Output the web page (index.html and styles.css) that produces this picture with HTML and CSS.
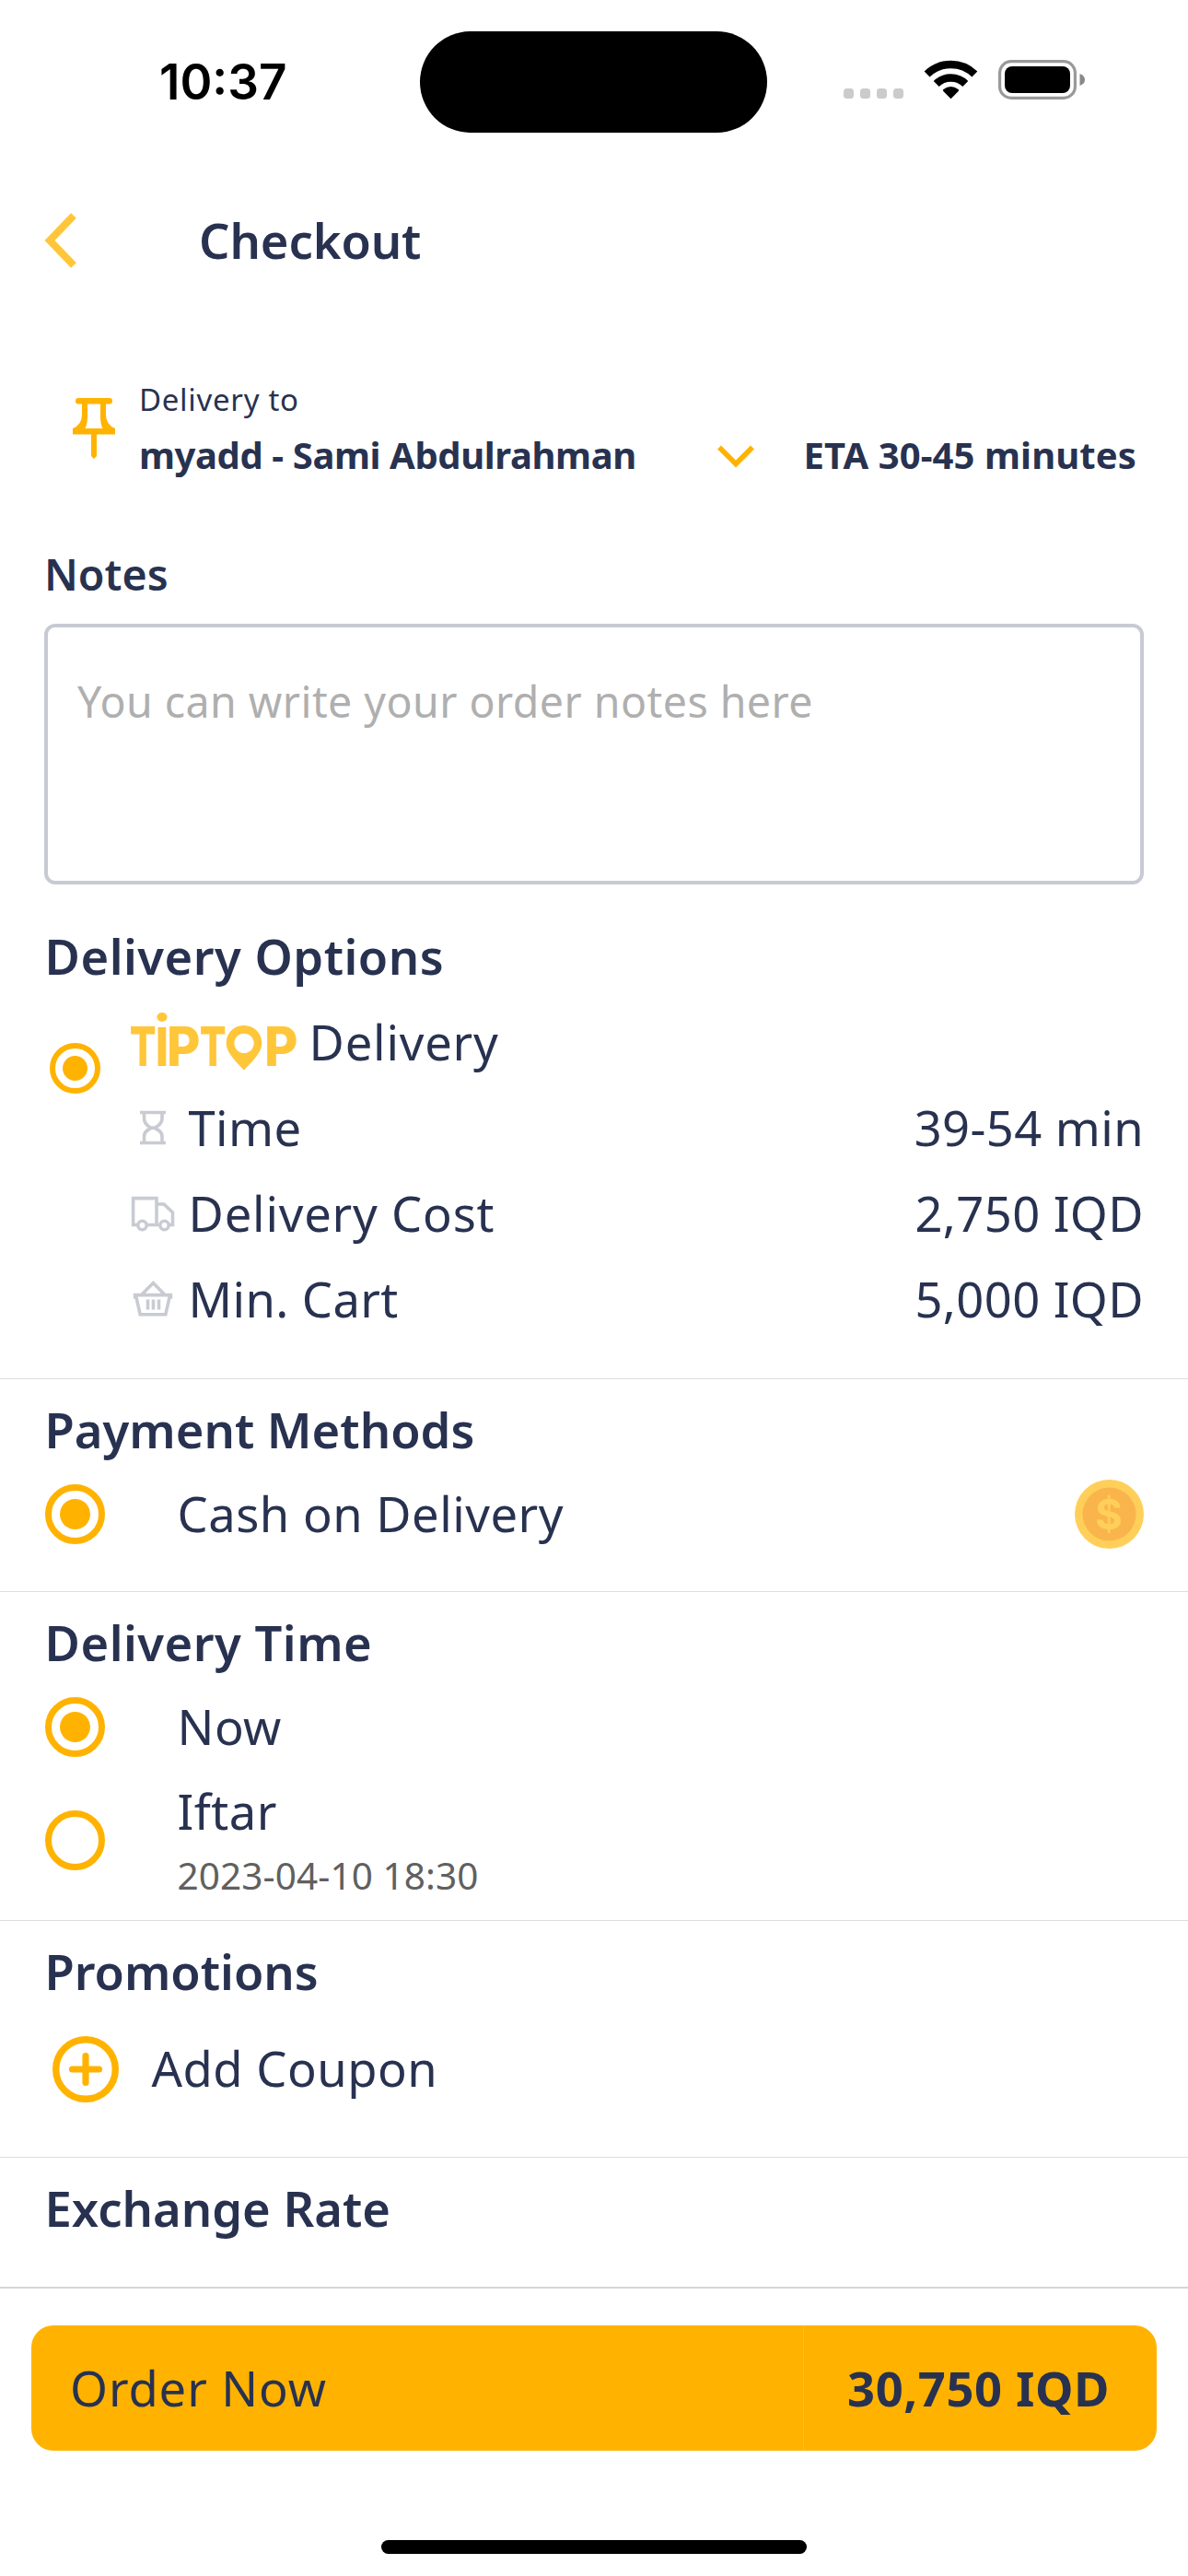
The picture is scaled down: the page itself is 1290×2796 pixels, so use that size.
FILE: index.html
```html
<!DOCTYPE html>
<html lang="en">
<head>
<meta charset="utf-8">
<title>Checkout</title>
<link rel="stylesheet" href="styles.css">
</head>
<body>
<div class="screen">
  <div class="status">
    <span class="clock">10:37</span>
    <span class="island"></span>
    <svg class="status-icons" width="262" height="44" viewBox="0 0 262 44">
      <g fill="#cbcbcb">
        <rect x="0" y="31" width="11" height="11" rx="3.5"/>
        <rect x="18" y="31" width="11" height="11" rx="3.5"/>
        <rect x="36" y="31" width="11" height="11" rx="3.5"/>
        <rect x="54" y="31" width="11" height="11" rx="3.5"/>
      </g>
      <g fill="none" stroke="#000" stroke-width="8.4">
        <path d="M90.600 15.600A37 37 0 0 1 142.400 15.600"/>
        <path d="M100.700 26A22.500 22.500 0 0 1 132.300 26"/>
      </g>
      <path d="M116.500 42.200l-8.200-8.300q-.9-1 .1-1.800q8.100-6.300 16.200 0q1 .8.100 1.800z"/>
      <rect x="169.600" y="1.600" width="81.800" height="39.800" rx="12.500" fill="none" stroke="#999" stroke-width="3.200"/>
      <rect x="175" y="7" width="71" height="29" rx="8"/>
      <path d="M256.500 15q5.500 2 5.500 6.500t-5.500 6.500z" fill="#888"/>
    </svg>
  </div>

  <header class="topbar">
    <svg width="36" height="62" viewBox="0 0 36 62"><path d="M32 4L6 31L32 58" fill="none" stroke="#ffc63a" stroke-width="8"/></svg>
    <h1 class="title">Checkout</h1>
  </header>

  <section class="address">
    <svg class="pin" width="46" height="66" viewBox="0 0 46 66">
      <path fill="#ffb300" fill-rule="evenodd" d="M6 0H40Q43 0 43 3.300T40 6.500H36V18Q36 29 46 33V39.500H26V63L23 66L20 63V39.500H0V33Q10 29 10 18V6.500H6Q3 6.500 3 3.300T6 0ZM16 6.500V20Q16 28 13.500 33H32.500Q30 28 30 20V6.500Z"/>
    </svg>
    <div class="address-text">
      <span class="address-label">Delivery to</span>
      <span class="address-name">myadd - Sami Abdulrahman</span>
    </div>
    <svg class="caret" width="42" height="26" viewBox="0 0 42 26"><path d="M3 3.500L21 21.500L39 3.500" fill="none" stroke="#ffb300" stroke-width="5.500"/></svg>
    <span class="eta">ETA 30-45 minutes</span>
  </section>

  <section class="notes">
    <h2 class="notes-title">Notes</h2>
    <div class="notes-box">You can write your order notes here</div>
  </section>

  <section class="section options">
    <h2 class="heading">Delivery Options</h2>
    <div class="option">
      <span class="radio radio-small checked"></span>
      <div class="option-rows">
        <div class="row brand-row">
          <svg class="brand" width="180" height="63" viewBox="33 30 540 189" fill="#ffc63a" font-family="Inter, sans-serif">
            <text x="29" y="205" font-size="179" font-weight="800" textLength="87" lengthAdjust="spacingAndGlyphs">T</text>
            <text x="104" y="205" font-size="232" font-weight="550" textLength="62" lengthAdjust="spacingAndGlyphs">i</text>
            <text x="150" y="205" font-size="179" font-weight="800" textLength="110" lengthAdjust="spacingAndGlyphs">P</text>
            <text x="257" y="205" font-size="179" font-weight="800" textLength="87" lengthAdjust="spacingAndGlyphs">T</text>
            <path fill-rule="evenodd" d="M402 72C435 72 460 97 460 130C460 160 430 188 402 218C374 188 344 160 344 130C344 97 369 72 402 72ZM402 98A32 32 0 1 0 402 162A32 32 0 1 0 402 98Z"/>
            <text x="468" y="205" font-size="179" font-weight="800" textLength="110" lengthAdjust="spacingAndGlyphs">P</text>
          </svg>
          <span>Delivery</span>
        </div>
        <div class="row">
          <svg class="row-icon" width="48" height="44" viewBox="0 0 48 44">
            <path d="M10 5.500H38M10 38.500H38M14.500 6V12Q14.500 18 21 21.500Q24 23 27 21.500Q34 18 34 12V6M14.500 38V32Q14.500 26 21 23Q24 21 27 23Q34 26 34 32V38"/>
          </svg>
          <span class="tight">Time</span><span class="value tight">39-54 min</span>
        </div>
        <div class="row">
          <svg class="row-icon" width="48" height="44" viewBox="0 0 48 44">
            <path d="M7 34.500H2.600V5.600H28V34.500H18M28 12H36L45.500 21V34.500H42M30 34.500H18"/>
            <circle cx="12.500" cy="35" r="4.700"/><circle cx="36.500" cy="35" r="4.700"/>
          </svg>
          <span>Delivery Cost</span><span class="value tight">2,750 IQD</span>
        </div>
        <div class="row">
          <svg class="row-icon" width="48" height="44" viewBox="0 0 48 44">
            <path d="M4.600 20V17.600H43.400V20H42L37.800 38.800H10.200L6 20ZM12 17L24.400 4.500L36.500 17M18.500 22.500V33.500M24.500 22.500V33.500M30.500 22.500V33.500"/>
          </svg>
          <span class="tight">Min. Cart</span><span class="value tight">5,000 IQD</span>
        </div>
      </div>
    </div>
  </section>

  <section class="section payment">
    <h2 class="heading heading-tight">Payment Methods</h2>
    <div class="choice">
      <span class="radio checked"></span>
      <span class="choice-label">Cash on Delivery</span>
      <svg class="coin" width="75" height="75" viewBox="0 0 75 75">
        <circle cx="37.500" cy="37.500" r="37.500" fill="#ffcf5a"/>
        <circle cx="37.500" cy="37.500" r="29" fill="#f9b54c"/>
        <text x="37.500" y="54" text-anchor="middle" font-family="Inter, sans-serif" font-weight="700" font-size="45" fill="#ffcf5a">$</text>
      </svg>
    </div>
  </section>

  <section class="section schedule">
    <h2 class="heading">Delivery Time</h2>
    <div class="choice">
      <span class="radio checked"></span>
      <span class="choice-label">Now</span>
    </div>
    <div class="choice choice-tall">
      <span class="radio"></span>
      <div class="choice-label stacked">
        <span>Iftar</span>
        <span class="date">2023-04-10 18:30</span>
      </div>
    </div>
  </section>

  <section class="section promotions">
    <h2 class="heading heading-tight">Promotions</h2>
    <div class="coupon">
      <svg width="72" height="72" viewBox="0 0 72 72" fill="none" stroke="#ffb300">
        <circle cx="36" cy="36" r="32.300" stroke-width="7.400"/>
        <path d="M36 21.500V50.500M21.500 36H50.500" stroke-width="7.200" stroke-linecap="round"/>
      </svg>
      <span class="coupon-label">Add Coupon</span>
    </div>
  </section>

  <section class="section exchange">
    <h2 class="heading heading-tight">Exchange Rate</h2>
  </section>

  <footer class="footer">
    <div class="order">
      <span class="order-label">Order Now</span>
      <span class="order-total">30,750 IQD</span>
    </div>
    <span class="home"></span>
  </footer>
</div>
</body>
</html>
```
FILE: styles.css
```css
* { box-sizing: border-box; }

body {
  margin: 0;
  background: #fff;
  color: #283250;
  font-family: "Noto Sans", sans-serif;
  font-size: 52.5px;
  letter-spacing: 0.8px;
}

h1, h2 { margin: 0; font-size: inherit; font-weight: 580; }
svg { display: block; flex: none; }

.screen {
  width: 1290px;
  height: 2796px;
  display: flex;
  flex-direction: column;
  overflow: hidden;
  white-space: nowrap;
}

.status {
  height: 154px;
  display: grid;
  grid-template-columns: 456px 377px 1fr;
  align-items: start;
}
.clock {
  padding: 57px 0 0 173px;
  font: 600 53px/64px Inter, sans-serif;
  letter-spacing: 0;
  color: #000;
}
.island { margin-top: 34px; height: 110px; border-radius: 55px; background: #000; }
.status-icons { margin: 65px 0 0 83px; }

.topbar {
  height: 213px;
  display: flex;
  align-items: center;
  padding-left: 48px;
  gap: 132px;
}
.title { letter-spacing: -0.1px; }

.address {
  height: 223px;
  display: flex;
  align-items: flex-start;
  padding: 37px 56px 0 79px;
}
.pin { margin-top: 28px; }
.address-text { display: flex; flex-direction: column; margin-left: 26px; width: 627px; }
.address-label { font-size: 33px; line-height: 60px; letter-spacing: 0.7px; }
.address-name, .eta { font-size: 40px; line-height: 60px; font-weight: 700; letter-spacing: -0.4px; }
.caret { margin-top: 78px; }
.eta { margin: 60px 0 0 auto; letter-spacing: 0.1px; }

.notes { height: 401px; padding: 0 48px; }
.notes-title { font-size: 46.5px; line-height: 67px; letter-spacing: 0; }
.notes-box {
  margin-top: 20px;
  height: 283px;
  padding: 47px 32px;
  border: 4.500px solid #c8cad3;
  border-radius: 12px;
  font-size: 46.5px;
  line-height: 66px;
  letter-spacing: 0.450px;
  color: #afafaf;
}

.section { border-bottom: 1px solid #dedede; padding: 20px 48px 0 48.500px; }
.heading { line-height: 70px; letter-spacing: 0.5px; }
.heading-tight { letter-spacing: 0; }

.options { height: 506px; padding-top: 0; }
.options .heading { line-height: 93px; }
.option { display: flex; align-items: flex-start; }
.option-rows { flex: 1; margin-left: 33px; }
.row { height: 93px; display: flex; align-items: center; gap: 15px; }
.row-icon { fill: none; stroke: #c9cbd3; stroke-width: 3.600; }
.brand-row { gap: 14px; }
.brand { overflow: visible; }
.value { margin-left: auto; }
.tight { letter-spacing: 0.4px; }

.radio {
  flex: none;
  display: flex;
  align-items: center;
  justify-content: center;
  width: 65px;
  height: 65px;
  border: 7.500px solid #ffb300;
  border-radius: 50%;
}
.radio.checked::after {
  content: "";
  width: 33px;
  height: 33px;
  border-radius: 50%;
  background: #ffb300;
}
.radio-small { width: 55px; height: 55px; border-width: 6px; margin: 48px 0 0 5px; }
.radio-small.checked::after { width: 27px; height: 27px; }

.payment { height: 231px; }
.choice { height: 92px; margin-top: 10px; display: flex; align-items: center; }
.choice-label { margin-left: 79px; letter-spacing: 0.5px; margin-top: -1px; }
.coin { margin-left: auto; }

.schedule { height: 357px; }
.choice-tall { height: 154px; margin-top: 0; }
.stacked { display: flex; flex-direction: column; line-height: 70px; padding-top: 9px; }
.date { font-size: 40.5px; letter-spacing: 0.1px; color: #606060; }

.promotions { height: 257px; }
.coupon {
  height: 92px;
  margin-top: 25px;
  padding-left: 8px;
  display: flex;
  align-items: center;
  gap: 36px;
}
.coupon-label { letter-spacing: 0.5px; margin-top: -4px; }

.exchange { flex: 1; border-bottom: 2px solid #d6d6d6; }

.footer {
  height: 312px;
  padding: 40px 34px 24px;
  display: flex;
  flex-direction: column;
  justify-content: space-between;
}
.order {
  height: 136px;
  display: flex;
  border-radius: 24px;
  background: #ffb300;
  line-height: 136px;
}
.order-label { width: 839px; padding-left: 42px; border-right: 1px solid #ffbd26; letter-spacing: 0.9px; }
.order-total { padding-left: 47px; font-weight: 700; letter-spacing: 0.6px; }
.home { align-self: center; width: 462px; height: 15px; border-radius: 8px; background: #000; }
```
